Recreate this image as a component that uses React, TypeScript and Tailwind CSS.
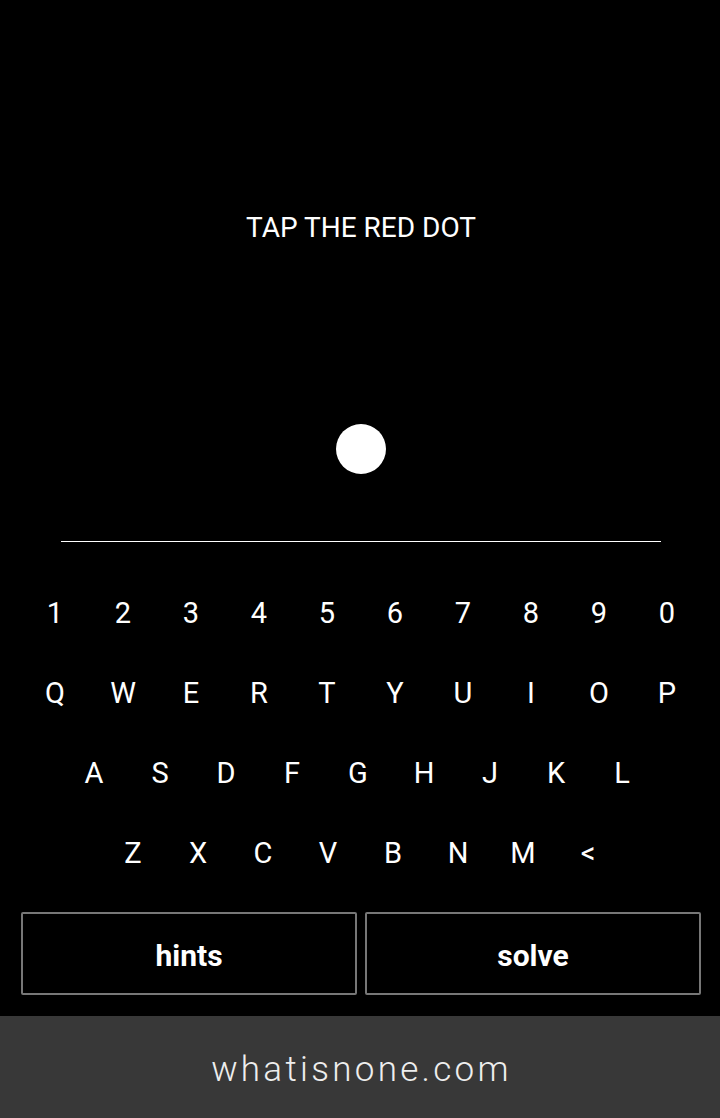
import React from "react";

const rows: { keys: string[]; cell: string; shift: string }[] = [
  { keys: ["1", "2", "3", "4", "5", "6", "7", "8", "9", "0"], cell: "w-[68px]", shift: "pl-[2px]" },
  { keys: ["Q", "W", "E", "R", "T", "Y", "U", "I", "O", "P"], cell: "w-[68px]", shift: "pl-[2px]" },
  { keys: ["A", "S", "D", "F", "G", "H", "J", "K", "L"], cell: "w-[66px]", shift: "pr-[4px]" },
  { keys: ["Z", "X", "C", "V", "B", "N", "M", "<"], cell: "w-[65px]", shift: "pl-[1px]" },
];

const App = () => {
  return (
    <div
      className="w-[720px] h-[1118px] bg-black text-white flex flex-col"
      style={{ fontFamily: "Roboto, 'Noto Sans', sans-serif" }}
    >
      <main className="flex-1 flex flex-col items-center">
        <h1 className="mt-[212px] h-[32px] leading-[32px] text-[28px] font-normal text-center pl-[2px]">
          TAP THE RED DOT
        </h1>

        <button className="mt-[180px] w-[50px] h-[50px] rounded-full bg-white ml-[2px]" aria-label="dot" />

        <div className="mt-[67px] w-[600px] h-px bg-white ml-[2px]" />

        <section className="mt-[31px] w-full flex flex-col">
          {rows.map((row, i) => (
            <div key={i} className={`flex justify-center h-[80px] items-center ${row.shift}`}>
              {row.keys.map((k) => (
                <span key={k} className={`${row.cell} text-center text-[29px] leading-[80px]`}>
                  {k}
                </span>
              ))}
            </div>
          ))}
        </section>

        <div className="mt-[19px] w-full pl-[21px] pr-[19px] grid grid-cols-2 gap-[8px]">
          <button className="h-[83px] pt-[3px] border-2 border-[#777] rounded-[2px] text-[30px] font-bold">hints</button>
          <button className="h-[83px] pt-[3px] border-2 border-[#777] rounded-[2px] text-[30px] font-bold">solve</button>
        </div>
      </main>

      <footer className="h-[102px] pt-[6px] bg-[#383838] flex items-center justify-center">
        <span className="text-[35px] font-light tracking-[3.3px] text-[#eeeeee] pl-[3px]">whatisnone.com</span>
      </footer>
    </div>
  );
};

export default App;
